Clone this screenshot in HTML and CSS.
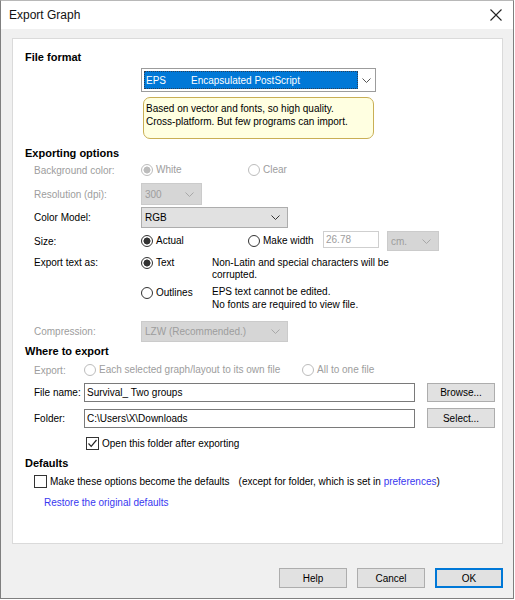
FILE: index.html
```html
<!DOCTYPE html>
<html lang="en">
  <head>
    <meta charset="UTF-8" />
    <title>Export Graph</title>
    <link rel="stylesheet" href="styles.css">
  </head>
  <body>
    <div class="window">
      <div class="titlebar">
        <span class="title">Export Graph</span>
        <svg class="close" width="12" height="12" viewBox="0 0 12 12"><path d="M0.5 0.5 L11.5 11.5 M11.5 0.5 L0.5 11.5" stroke="#222" stroke-width="1.1" fill="none"/></svg>
      </div>

      <div class="client">
        <div class="panel">
          <!-- File format -->
          <div class="heading">File format</div>
          <div class="r-format">
            <div class="format-combo">
              <div class="format-sel"><span class="code">EPS</span><span>Encapsulated PostScript</span></div>
              <svg width="9" height="5" viewBox="0 0 9 5"><path d="M0.5 0.5 L4.5 4.5 L8.5 0.5" fill="none" stroke="#555"/></svg>
            </div>
          </div>
          <div class="tip">Based on vector and fonts, so high quality.<br />Cross-platform. But few programs can import.</div>

          <!-- Exporting options -->
          <div class="heading h-export">Exporting options</div>
          <div class="row r-bg off">
            <span class="label">Background color:</span>
            <span class="radio opt1"><span class="dot on"></span>White</span>
            <span class="radio"><span class="dot"></span>Clear</span>
          </div>
          <div class="row r-res off">
            <span class="label">Resolution (dpi):</span>
            <div class="combo dis w-res"><span>300</span><svg width="9" height="5" viewBox="0 0 9 5"><path d="M0.5 0.5 L4.5 4.5 L8.5 0.5" fill="none" stroke="#a8a8a8"/></svg></div>
          </div>
          <div class="row r-color">
            <span class="label">Color Model:</span>
            <div class="combo w-wide"><span>RGB</span><svg width="9" height="5" viewBox="0 0 9 5"><path d="M0.5 0.5 L4.5 4.5 L8.5 0.5" fill="none" stroke="#333"/></svg></div>
          </div>
          <div class="row r-size">
            <span class="label">Size:</span>
            <span class="radio opt1"><span class="dot on"></span>Actual</span>
            <span class="radio opt-width"><span class="dot"></span>Make width</span>
            <input class="num" type="text" value="26.78" disabled />
            <div class="combo dis w-unit"><span>cm.</span><svg width="9" height="5" viewBox="0 0 9 5"><path d="M0.5 0.5 L4.5 4.5 L8.5 0.5" fill="none" stroke="#a8a8a8"/></svg></div>
          </div>
          <div class="row r-text">
            <span class="label">Export text as:</span>
            <span class="radio opt-text"><span class="dot on"></span>Text</span>
            <div class="desc">Non-Latin and special characters will be<br />corrupted.</div>
          </div>
          <div class="row r-outl">
            <span class="label"></span>
            <span class="radio opt-text"><span class="dot"></span>Outlines</span>
            <div class="desc">EPS text cannot be edited.<br />No fonts are required to view file.</div>
          </div>
          <div class="row r-comp off">
            <span class="label">Compression:</span>
            <div class="combo dis w-wide"><span>LZW (Recommended.)</span><svg width="9" height="5" viewBox="0 0 9 5"><path d="M0.5 0.5 L4.5 4.5 L8.5 0.5" fill="none" stroke="#a8a8a8"/></svg></div>
          </div>

          <!-- Where to export -->
          <div class="heading h-where">Where to export</div>
          <div class="row where r-exp off">
            <span class="label">Export:</span>
            <span class="radio opt-each"><span class="dot"></span>Each selected graph/layout to its own file</span>
            <span class="radio"><span class="dot"></span>All to one file</span>
          </div>
          <div class="row where r-file">
            <span class="label">File name:</span>
            <input class="path" type="text" value="Survival_ Two groups" />
            <button class="side">Browse...</button>
          </div>
          <div class="row where r-folder">
            <span class="label">Folder:</span>
            <input class="path" type="text" value="C:\Users\X\Downloads" />
            <button class="side tall">Select...</button>
          </div>
          <div class="row r-open">
            <span class="check"><span class="box"><svg width="11" height="11" viewBox="0 0 11 11"><path d="M1.5 5.5 L4.2 8.3 L9.5 2" fill="none" stroke="#222" stroke-width="1.2"/></svg></span>Open this folder after exporting</span>
          </div>

          <!-- Defaults -->
          <div class="heading h-def">Defaults</div>
          <div class="row r-make">
            <span class="check"><span class="box"></span>Make these options become the defaults</span>
            <span class="note">(except for folder, which is set in <a href="#">preferences</a>)</span>
          </div>
          <div class="row r-restore">
            <a href="#">Restore the original defaults</a>
          </div>
        </div>

        <div class="buttons">
          <button>Help</button>
          <button>Cancel</button>
          <button class="default">OK</button>
        </div>
      </div>
    </div>
  </body>
</html>
```

FILE: styles.css
```css
body {
  margin: 0;
  font-family: "Liberation Sans", Arial, sans-serif;
  font-size: 10px;
  color: #000;
  background: #fff;
}
.window {
  width: 514px;
  height: 599px;
  box-sizing: border-box;
  border: 1px solid #7f7f7f;
  border-top-color: #b8b8b8;
  background: #f0f0f0;
  display: flex;
  flex-direction: column;
}
.titlebar {
  height: 28px;
  flex: none;
  background: #fff;
  display: flex;
  align-items: center;
  justify-content: space-between;
  padding: 0 11px 0 8px;
}
.title {
  font-size: 12px;
  color: #111;
}
.client {
  padding: 9px 10px 0 11px;
}
.panel {
  height: 506px;
  box-sizing: border-box;
  background: #fff;
  border: 1px solid #dadada;
  padding-top: 11px;
}

/* headings */
.heading {
  height: 14px;
  line-height: 14px;
  padding-left: 12px;
  font-size: 11px;
  font-weight: bold;
}
.h-export { margin-top: 7px; }
.h-where { margin-top: 2px; }
.h-def { margin-top: 6px; }

/* format combo + tip */
.r-format {
  margin-top: 4px;
  height: 24px;
  padding-left: 128px;
}
.format-combo {
  width: 235px;
  height: 24px;
  box-sizing: border-box;
  border: 1px solid #9c9c9c;
  background: #fff;
  padding: 2px 4px 2px 2px;
  display: flex;
  align-items: center;
  justify-content: space-between;
}
.format-sel {
  width: 214px;
  height: 18px;
  box-sizing: border-box;
  background: #0078d7;
  border: 1px dotted #2a3f58;
  color: #fff;
  display: flex;
  align-items: center;
  padding-left: 1px;
}
.format-sel .code {
  width: 45px;
}
.tip {
  margin: 5px 0 0 130px;
  width: 231px;
  height: 42px;
  box-sizing: border-box;
  background: #ffffe1;
  border: 1px solid #c9af55;
  border-radius: 7px;
  padding: 4px 0 0 2px;
  line-height: 13px;
}

/* rows */
.row {
  display: flex;
  align-items: center;
  padding-left: 21px;
}
.label {
  width: 107px;
  flex: none;
}
.where .label {
  width: 50px;
}
.off {
  color: #9d9d9d;
}
.r-bg { margin-top: 2px; height: 16px; }
.r-res { margin-top: 5px; height: 22px; }
.r-color { margin-top: 2px; height: 21px; }
.r-size { margin-top: 3px; height: 20px; }
.r-text { margin-top: 6px; height: 24px; align-items: flex-start; }
.r-outl { margin-top: 5px; height: 24px; align-items: flex-start; }
.r-comp { margin-top: 11px; height: 21px; }
.r-exp { margin-top: 5px; height: 14px; }
.r-file { margin-top: 6px; height: 19px; }
.r-folder { margin-top: 6px; height: 20px; }
.r-open { margin-top: 8px; height: 14px; padding-left: 73px; }
.r-make { margin-top: 4px; height: 14px; }
.r-restore { margin-top: 7px; height: 14px; padding-left: 31px; }

/* radio buttons */
.radio {
  display: inline-flex;
  align-items: center;
  gap: 3px;
  line-height: 12px;
}
.dot {
  width: 12px;
  height: 12px;
  flex: none;
  box-sizing: border-box;
  border: 1px solid #333;
  border-radius: 50%;
  background: #fff;
}
.dot.on {
  background: radial-gradient(circle, #333 0 3.2px, #fff 3.8px);
}
.off .dot {
  border-color: #bcbcbc;
}
.off .dot.on {
  background: radial-gradient(circle, #bcbcbc 0 3.2px, #fff 3.8px);
}
.opt1 { width: 107px; }
.opt-width { width: 75px; }
.opt-text { width: 71px; flex: none; }
.r-outl .opt-text { margin-top: 1px; }
.opt-each { width: 218px; }
.desc {
  line-height: 12px;
}
.r-outl .desc {
  line-height: 12.5px;
}

/* checkboxes */
.check {
  display: inline-flex;
  align-items: center;
  gap: 3px;
}
.box {
  width: 13px;
  height: 13px;
  box-sizing: border-box;
  border: 1px solid #333;
  background: #fff;
  display: flex;
  align-items: center;
  justify-content: center;
}
.note {
  margin-left: 9px;
}
a {
  color: #3838f0;
  text-decoration: none;
}

/* combo boxes */
.combo {
  box-sizing: border-box;
  border: 1px solid #adadad;
  background: #e1e1e1;
  display: flex;
  align-items: center;
  justify-content: space-between;
  padding: 0 7px 0 3px;
}
.combo.dis {
  background: #d6d6d6;
  border-color: #cbcbcb;
  color: #9d9d9d;
}
.w-res { width: 61px; height: 22px; }
.w-wide { width: 147px; height: 21px; }
.w-unit { width: 52px; height: 20px; margin-left: 8px; }

/* edits */
input {
  font: inherit;
  box-sizing: border-box;
  margin: 0;
  padding: 0 2px;
  border: 1px solid #7a7a7a;
  background: #fff;
  color: #000;
  outline: none;
}
.num {
  width: 56px;
  height: 17px;
  border-color: #cfcfcf;
  color: #9d9d9d;
  align-self: flex-start;
}
.path {
  width: 331px;
  height: 19px;
}

/* buttons */
button {
  font: inherit;
  color: #000;
  width: 68px;
  height: 20px;
  box-sizing: border-box;
  border: 1px solid #adadad;
  background: #e1e1e1;
  padding: 0;
}
.side {
  height: 19px;
  margin-left: 12px;
}
.side.tall {
  height: 20px;
}
.buttons {
  display: flex;
  justify-content: flex-end;
  gap: 10px;
  margin-top: 24px;
}
.default {
  border-color: #0078d7;
  box-shadow: inset 0 0 0 1px #0078d7;
}
```
